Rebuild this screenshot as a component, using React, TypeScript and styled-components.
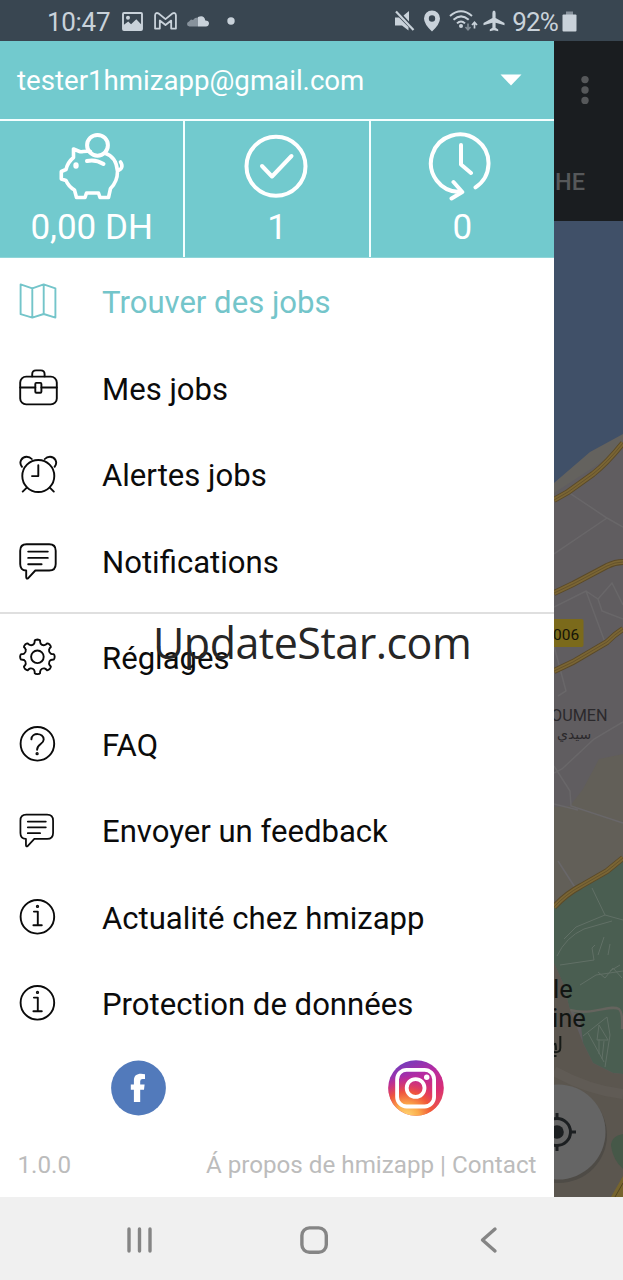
import React from 'react';
import styled, { createGlobalStyle } from 'styled-components';

const TEAL = '#72cace';

const GlobalStyle = createGlobalStyle`
  * { box-sizing: border-box; }
  body { margin: 0; background: #fff; font-family: Roboto, "Liberation Sans", sans-serif; }
  svg { display: block; flex: none; }
`;

const Screen = styled.div`
  position: relative;
  display: flex;
  flex-direction: column;
  width: 623px;
  height: 1280px;
  overflow: hidden;
`;

const StatusBar = styled.header`
  display: flex;
  align-items: center;
  justify-content: space-between;
  flex: none;
  height: 41px;
  padding: 2px 46px 0 47px;
  background: #394651;
  color: #c9d2da;
`;

const StatusGroup = styled.div`
  display: flex;
  align-items: center;
`;

const StatusText = styled.span<{ $spacing?: number }>`
  font-size: 26px;
  line-height: 40px;
  letter-spacing: ${(p) => p.$spacing ?? 0}px;
`;

const StatusIcon = styled.svg<{ $before: number }>`
  margin-left: ${(p) => p.$before}px;
  margin-bottom: 1px;
  fill: currentColor;
`;

const BatteryLevel = styled(StatusText)`
  margin-left: 7px;
`;

const Body = styled.div`
  display: flex;
  flex: none;
  height: 1156px;
`;

const Drawer = styled.aside`
  display: flex;
  flex-direction: column;
  flex: none;
  width: 554px;
  background: #fff;
`;

const Account = styled.div`
  display: flex;
  align-items: center;
  justify-content: space-between;
  height: 78px;
  padding: 0 32px 0 17px;
  background: ${TEAL};
  color: #fff;
  font-size: 27.65px;
`;

const Stats = styled.div`
  display: grid;
  grid-template-columns: repeat(3, 1fr);
  column-gap: 2px;
  height: 139px;
  padding: 2px 0 0;
  border-bottom: 1px solid #8fd5d8;
  background: #f4ffff;
`;

const Stat = styled.div`
  display: flex;
  flex-direction: column;
  align-items: center;
  padding-top: 9px;
  background: ${TEAL};
  color: #fff;
  font-size: 35px;
  line-height: 40px;
`;

const StatIcon = styled.svg`
  width: 70px;
  height: 76px;
  fill: none;
  stroke: #fff;
  stroke-width: 4;
  stroke-linecap: round;
  stroke-linejoin: round;
  margin-bottom: 2px;
`;

const MenuGroup = styled.nav<{ $divided?: boolean }>`
  display: flex;
  flex-direction: column;
  padding-top: 1px;
  padding-bottom: ${(p) => (p.$divided ? 7 : 0)}px;
  border-bottom: ${(p) => (p.$divided ? '2px solid #dfdfdf' : 'none')};
`;

const MenuRow = styled.a<{ $active?: boolean }>`
  display: flex;
  align-items: center;
  height: 86.5px;
  padding-left: 18px;
  color: ${(p) => (p.$active ? '#74c5ca' : '#0b0b0b')};
`;

const MenuIcon = styled.svg`
  width: 40px;
  height: 40px;
  margin: 0 44px 2px 0;
  fill: none;
  stroke: currentColor;
  stroke-width: 1.9;
  stroke-linecap: round;
  stroke-linejoin: round;
`;

const MenuLabel = styled.span`
  padding-top: 2px;
  font-size: 31.1px;
  line-height: 40px;
  white-space: nowrap;
`;

const Social = styled.div`
  display: grid;
  grid-template-columns: 1fr 1fr;
  justify-items: center;
  align-items: center;
  height: 80px;
`;

const Footer = styled.footer`
  display: flex;
  justify-content: space-between;
  padding: 22px 17.5px 0;
  color: #bcbcbc;
  font-size: 24.2px;
  line-height: 30px;
`;

const Behind = styled.main`
  display: flex;
  flex-direction: column;
  flex: none;
  width: 69px;
  background: #1a1d20;
`;

const DimmedBar = styled.div`
  display: flex;
  flex-direction: column;
  height: 180px;
  padding: 34px 0 0 1px;
  color: #56585a;
`;

const TabLabel = styled.span`
  margin-top: 64px;
  font-size: 23.5px;
  line-height: 26px;
  font-weight: 500;
`;

const NavBar = styled.footer`
  display: flex;
  align-items: center;
  flex: none;
  height: 83px;
  padding: 3px 0 0 126px;
  gap: 146px;
  background: #f0f0f0;
`;

const NavIcon = styled.svg`
  width: 28px;
  height: 30px;
  fill: none;
  stroke: #858585;
  stroke-width: 3.4;
  stroke-linecap: round;
  stroke-linejoin: round;
`;

const Watermark = styled.div`
  position: absolute;
  left: 153px;
  top: 613px;
  font-family: "Open Sans", "Noto Sans", sans-serif;
  font-size: 43px;
  line-height: 60px;
  letter-spacing: -0.5px;
  color: #262626;
  white-space: nowrap;
`;

const gearPath = (() => {
  const cx = 19.4;
  const cy = 19.8;
  const pts: string[] = [];
  for (let i = 0; i < 8; i++) {
    const a = (i * Math.PI) / 4 - Math.PI / 2;
    const at = (r: number, d: number) =>
      `${(cx + r * Math.cos(a + d)).toFixed(2)} ${(cy + r * Math.sin(a + d)).toFixed(2)}`;
    pts.push(
      `${i ? 'L' : 'M'}${at(13.6, -0.24)}Q${at(15, -0.17)} ${at(16.6, -0.16)}Q${at(17.3, -0.12)} ${at(17.3, 0)}Q${at(17.3, 0.12)} ${at(16.6, 0.16)}Q${at(15, 0.17)} ${at(13.6, 0.24)}Q${at(12.2, 0.39)} ${at(13.6, 0.545)}`,
    );
  }
  return pts.join('') + 'Z';
})();

const ChatGlyph = () => (
  <>
    <path d="M8.5 3.2H31.2Q37.7 3.2 37.7 9.7V23Q37.7 29.5 31.2 29.5H17.3L10 37.3Q8.2 38.2 8.2 36V29.5Q2.2 29.5 2.2 23V9.7Q2.2 3.2 8.5 3.2Z" />
    <path d="M10.2 10.6H29.8M10.2 16.9H29.8M10.2 23.2H23.6" />
  </>
);

const InfoGlyph = () => (
  <>
    <circle cx="19.4" cy="19.8" r="16.8" />
    <path d="M15.9 14.6H19.8V28M15.4 28.2H23.8" />
    <circle cx="19.5" cy="9.4" r="0.7" />
  </>
);

const glyphs: Record<string, React.ReactNode> = {
  map: <path d="M2.6 3.4L14.3 7.3L25.7 3.4L37.4 7.3V36.6L25.7 33L14.3 36.6L2.6 33.2ZM14.3 7.3V36.6M25.7 3.4V33" />,
  briefcase: (
    <>
      <rect x="2.2" y="8.6" width="36.6" height="27.8" rx="6" />
      <path d="M14.2 8.4V6.2Q14.2 2.4 18 2.4H22.8Q26.6 2.4 26.6 6.2V8.4M2.2 19.5H17.3M23.4 19.5H38.8" />
      <rect x="17.3" y="14.9" width="6.1" height="9.8" rx="1" />
    </>
  ),
  alarm: (
    <>
      <circle cx="20.3" cy="22" r="16" />
      <path d="M20.3 11.3V22.1H14M4 12.8C.2 8 4 2.7 8.6 2.7Q11.8 2.7 13.8 5M36.6 12.8C40.4 8 36.6 2.7 32 2.7Q28.8 2.7 26.8 5M8.8 33.6L4.7 37.6M31.8 33.6L35.8 37.6" />
    </>
  ),
  chat: <ChatGlyph />,
  gear: (
    <>
      <path d={gearPath} />
      <circle cx="19.4" cy="19.8" r="6.3" />
    </>
  ),
  help: (
    <>
      <circle cx="19.4" cy="19.8" r="16.8" />
      <path d="M13.4 15.4C13.6 8.2 25.8 8.4 25.7 15.4C25.6 20.4 19.1 19.6 19.1 25.8" />
      <circle cx="19.1" cy="29.7" r="0.7" />
    </>
  ),
  feedback: (
    <g transform="translate(.4 1.8) scale(.92)">
      <ChatGlyph />
    </g>
  ),
  info: <InfoGlyph />,
};

const mainItems = [
  { icon: 'map', label: 'Trouver des jobs', active: true },
  { icon: 'briefcase', label: 'Mes jobs' },
  { icon: 'alarm', label: 'Alertes jobs' },
  { icon: 'chat', label: 'Notifications' },
];

const moreItems = [
  { icon: 'gear', label: 'Réglages' },
  { icon: 'help', label: 'FAQ' },
  { icon: 'feedback', label: 'Envoyer un feedback' },
  { icon: 'info', label: 'Actualité chez hmizapp' },
  { icon: 'info', label: 'Protection de données' },
];

const MenuItem = ({ icon, label, active }: { icon: string; label: string; active?: boolean }) => (
  <MenuRow $active={active}>
    <MenuIcon viewBox="0 0 40 40">{glyphs[icon]}</MenuIcon>
    <MenuLabel>{label}</MenuLabel>
  </MenuRow>
);

const Road = ({ d }: { d: string }) => (
  <g fill="none">
    <path d={d} stroke="#5b4a28" strokeWidth="6" />
    <path d={d} stroke="#7a6534" strokeWidth="4.2" />
    <path d={d} stroke="#5f4e2b" strokeWidth=".8" />
  </g>
);

const MapView = () => (
  <svg width="69" height="976" viewBox="0 0 69 976" fontFamily="Roboto, sans-serif">
    <rect width="69" height="976" fill="#605d60" />
    <path d="M0 255L36 224L69 205V226L40 246L0 272Z" fill="#64625e" />
    <path d="M0 0H69V213L36 231L0 262Z" fill="#405068" />
    <path d="M69 533L45 538L29 568L16 585L0 586V690L69 640Z" fill="#625f58" />
    <g fill="none" stroke="#696769" strokeWidth="1.5">
      <path d="M14 271L53 297L69 306M0 333L53 297M0 386L32 370L52 424M32 370L44 378L58 362L69 384M44 378L48 390L69 398M0 425L12 470L4 475M69 501L40 518L8 548L0 552M0 545L16 570L17 585L69 602M0 583L24 589M4 640L22 668" />
    </g>
    <path d="M0 686L19 669L53 649L69 638V853L59 852L39 842L29 822L26 795L16 789L9 762L0 742Z" fill="#4a5e51" />
    <path d="M16 789C38 795 56 783 65 788Q69 792 68 808" fill="none" stroke="#65645e" strokeWidth="2.4" />
    <path d="M0 742L9 762L16 789L29 822L39 842L59 852L69 853V976H0Z" fill="#5b564f" />
    <path d="M0 850Q34 869 69 873" fill="none" stroke="#605b55" strokeWidth="10" />
    <path d="M69 913Q57 915 57 925Q59 939 69 948Z" fill="#465848" />
    <g fill="none" stroke="#617066" strokeWidth="1">
      <path d="M38 667L51 694L69 699M51 694L22 706L10 718M3 735Q12 716 30 708L58 700M6 744L40 739L38 727L41 724M44 734L50 716M54 734L56 723M26 764L42 754L69 750M44 751L51 757L59 747L68 757M56 750L66 744" />
      <path d="M29 815L53 796L56 814L51 846M34 812L50 841M45 804L54 819L43 819ZM45 818V833M50 820L48 838" />
    </g>
    <Road d="M0 279L14 271L39 253Q53 242 69 222" />
    <Road d="M0 372L19 363L53 345Q61 341 69 341" />
    <Road d="M0 450L19 441L53 421Q61 413 69 408" />
    <Road d="M0 686Q12 673 27 665L53 650L69 637" />
    <path d="M57 976L69 955V976Z" fill="#76642d" />
    <path d="M61 976L69 962" stroke="#514421" />
    <rect x="-4" y="398" width="33.5" height="28" rx="2" fill="#7b6a1b" />
    <text x="-1" y="419" fontSize="15.5" fill="#151408">006</text>
    <text x="-3" y="500" fontSize="16.2" fill="#2b292c">OUMEN</text>
    <text x="3" y="518" fontSize="14" fill="#2b292c" fontFamily='"DejaVu Sans", sans-serif'>سيدي</text>
    <g fill="#111512" fontSize="25.5">
      <text x="-1" y="777">le</text>
      <text x="-2" y="806">ine</text>
    </g>
    <path d="M6.3 815V827Q6.3 832 0 831M0 824Q2 820 2 829M0 835H2.5" fill="none" stroke="#161a17" strokeWidth="2" />
    <circle cx="5" cy="914" r="48" fill="#4e4b46" />
    <circle cx="4" cy="911" r="47.5" fill="#656565" />
    <g stroke="#1c1f21" fill="none" strokeWidth="3">
      <circle cx="3" cy="911" r="13.5" />
      <path d="M16 911H22M3 898V892M3 924V930" />
    </g>
    <circle cx="3" cy="911" r="6.8" fill="#1c1f21" />
  </svg>
);

const App = () => (
  <Screen>
    <GlobalStyle />
    <StatusBar>
      <StatusGroup>
        <StatusText $spacing={-0.3}>10:47</StatusText>
        <StatusIcon $before={12} width="21" height="19" viewBox="0 0 22 20">
          <path fillRule="evenodd" d="M2 0H20Q22 0 22 2V18Q22 20 20 20H2Q0 20 0 18V2Q0 0 2 0ZM2 2V13.5L6.5 10L9.5 13L15 7.5L20 13V2ZM6.3 4A2.1 2.1 0 1 1 6.2 8.2A2.1 2.1 0 0 1 6.3 4Z" />
        </StatusIcon>
        <StatusIcon $before={11} width="23" height="18" viewBox="0 0 24 19">
          <path d="M1 17.5V3.5Q1.4.2 4.4 1.4L12 7.5L19.6 1.4Q22.6.2 23 3.5V17.5H18V9L12 13.7L6 9V17.5Z" fill="none" stroke="currentColor" strokeWidth="1.9" strokeLinejoin="round" />
        </StatusIcon>
        <StatusIcon $before={10} width="22" height="11" viewBox="0 0 22 11">
          <path d="M2 5.5L4 3.5L6 4L8 2L11 1.5V10.5H2.5Q0 10 0 8Q0 6 2 5.5Z" opacity=".55" />
          <path d="M11 1Q17-1.6 18.3 4.4Q22 4.5 22 7.6Q21.6 10.5 19 10.5H11Z" />
        </StatusIcon>
        <StatusIcon $before={18} width="8" height="8" viewBox="0 0 8 8">
          <circle cx="4" cy="4" r="3.7" />
        </StatusIcon>
      </StatusGroup>
      <StatusGroup>
        <StatusIcon $before={0} width="22" height="22" viewBox="0 0 22 22">
          <path d="M2 7.5H6L15.5 17V20.5L9 15.5H2ZM10.5 5.5L16 1V11.5Z" />
          <path d="M3 1.5L20.5 20" stroke="currentColor" strokeWidth="2.2" />
        </StatusIcon>
        <StatusIcon $before={8} width="18" height="22" viewBox="0 0 18 22">
          <path fillRule="evenodd" d="M9 .5A8 8 0 0 1 17 8.5Q17 14 9 21.5Q1 14 1 8.5A8 8 0 0 1 9 .5ZM9 5.3A3.2 3.2 0 1 0 9 11.7A3.2 3.2 0 0 0 9 5.3Z" />
        </StatusIcon>
        <StatusIcon $before={8} width="29" height="22" viewBox="0 0 29 22">
          <g fill="none" stroke="currentColor" strokeWidth="2">
            <path d="M1 6Q12-3.5 23 6M4.5 9.8Q12 3 19.7 9.8M8 13.4Q12 9.5 16 13.4" />
            <path d="M25.5 18.5V12.5M23 15L25.5 12.2L28 15" strokeWidth="1.7" />
            <path d="M19 13.5V19.5M16.5 17L19 19.7L21.5 17" strokeWidth="1.7" opacity=".5" />
          </g>
          <circle cx="12" cy="16" r="2" />
        </StatusIcon>
        <StatusIcon $before={5} width="22" height="22" viewBox="0 0 22 22">
          <path d="M11 .5Q12.6.5 12.6 3V8L21.5 13V15.2L12.6 12.8V17.8L15.2 19.6V21.3L11 20.2L6.8 21.3V19.6L9.4 17.8V12.8L.5 15.2V13L9.4 8V3Q9.4.5 11 .5Z" />
        </StatusIcon>
        <BatteryLevel $spacing={-0.8}>92%</BatteryLevel>
        <StatusIcon $before={4} width="15" height="21" viewBox="0 0 15 21">
          <path d="M4 .5H11V4H4Z" opacity=".55" />
          <rect x=".5" y="3.5" width="14" height="17" rx="1" />
        </StatusIcon>
      </StatusGroup>
    </StatusBar>

    <Body>
      <Drawer>
        <Account>
          <span>tester1hmizapp@gmail.com</span>
          <svg width="22" height="12" viewBox="0 0 22 12"><path d="M.5.5H21.5L11 11.5Z" fill="#fff" /></svg>
        </Account>
        <Stats>
          <Stat>
            <StatIcon viewBox="0 0 70 76">
              <circle cx="40.5" cy="15.3" r="10.4" />
              <path d="M33.5 21.5C27 20.5 25 22.5 22.5 21.5L16.5 19V27.5Q10.5 32.5 9 39.5L4.3 41.5V49L9 50.5Q11.5 56.5 17.5 60L19.5 67.5H28L29.5 63H41.5L43 67.5H51.5L53.5 58.5Q60.5 51.5 60.5 41.5Q59.5 26.5 47.5 23M60.5 41Q67.5 38 63.5 32" strokeWidth="3.6" />
              <path d="M30 31Q38.5 29 46.5 34" strokeWidth="4" />
              <ellipse cx="19" cy="35.5" rx="1.2" ry="1.8" strokeWidth="3" />
            </StatIcon>
            0,00 DH
          </Stat>
          <Stat>
            <StatIcon viewBox="0 0 70 76">
              <circle cx="34" cy="36.3" r="29.5" />
              <path d="M20 36L30 46.5L49.5 26" />
            </StatIcon>
            1
          </Stat>
          <Stat>
            <StatIcon viewBox="0 0 70 76">
              <path d="M48.5 57.3A28.8 28.8 0 1 0 33.5 62M26.5 52L35.3 62L24.5 68.5M34 15V34.5L44 43" />
            </StatIcon>
            0
          </Stat>
        </Stats>

        <MenuGroup $divided>
          {mainItems.map((item) => (
            <MenuItem key={item.label} {...item} />
          ))}
        </MenuGroup>
        <MenuGroup>
          {moreItems.map((item) => (
            <MenuItem key={item.label} {...item} />
          ))}
        </MenuGroup>

        <Social>
          <svg width="56" height="56" viewBox="0 0 56 56">
            <circle cx="27.5" cy="28" r="27.4" fill="#527abb" />
            <path d="M22.9 42V29.8H19.8V24.4H22.9V20.6C22.9 15.8 25.6 13.8 30 13.8Q32.6 13.8 34 14.2V18.9H31.6Q29.2 18.9 29.2 21.2V24.4H33.6L33 29.8H29.2V42Z" fill="#fff" />
          </svg>
          <svg width="56" height="56" viewBox="0 0 56 56">
            <defs>
              <linearGradient id="igBase" x1=".2" y1="0" x2=".6" y2="1">
                <stop offset="0" stopColor="#6a3fc0" />
                <stop offset=".35" stopColor="#b52ba3" />
                <stop offset=".7" stopColor="#d92d74" />
                <stop offset="1" stopColor="#e85b50" />
              </linearGradient>
              <radialGradient id="igGlow" cx=".33" cy="1.02" r=".75">
                <stop offset="0" stopColor="#ffd777" />
                <stop offset=".3" stopColor="#fbab4b" />
                <stop offset=".6" stopColor="#f35a35" stopOpacity=".9" />
                <stop offset="1" stopColor="#dc2c6c" stopOpacity="0" />
              </radialGradient>
            </defs>
            <circle cx="28" cy="28" r="27.8" fill="url(#igBase)" />
            <circle cx="28" cy="28" r="27.8" fill="url(#igGlow)" />
            <g fill="none" stroke="#fff" strokeWidth="3.8">
              <rect x="9.1" y="9.9" width="37" height="36.6" rx="9.5" />
              <circle cx="27.6" cy="28" r="8.9" />
            </g>
            <circle cx="38.7" cy="17.2" r="2.7" fill="#fff" />
          </svg>
        </Social>

        <Footer>
          <span>1.0.0</span>
          <span>Á propos de hmizapp | Contact</span>
        </Footer>
      </Drawer>

      <Behind>
        <DimmedBar>
          <svg width="60" height="30" viewBox="0 0 60 30" fill="#56585a">
            <circle cx="30" cy="4.6" r="3.7" />
            <circle cx="30" cy="15" r="3.7" />
            <circle cx="30" cy="25.4" r="3.7" />
          </svg>
          <TabLabel>HE</TabLabel>
        </DimmedBar>
        <MapView />
      </Behind>
    </Body>

    <NavBar>
      <NavIcon viewBox="0 0 28 30"><path d="M3 4V26M13.5 4V26M24 4V26" /></NavIcon>
      <NavIcon viewBox="0 0 28 30"><rect x="1.9" y="2.9" width="24.4" height="24.4" rx="7.5" /></NavIcon>
      <NavIcon viewBox="0 0 28 30"><path d="M21 4L8.5 15L21 26" /></NavIcon>
    </NavBar>

    <Watermark>UpdateStar.com</Watermark>
  </Screen>
);

export default App;
